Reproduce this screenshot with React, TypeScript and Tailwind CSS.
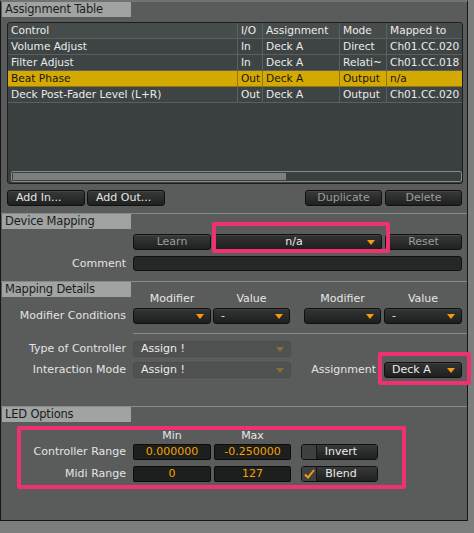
import type { ReactNode } from 'react';

const rows = [
  { control: 'Volume Adjust', io: 'In', assign: 'Deck A', mode: 'Direct', mapped: 'Ch01.CC.020' },
  { control: 'Filter Adjust', io: 'In', assign: 'Deck A', mode: 'Relati~', mapped: 'Ch01.CC.018' },
  { control: 'Beat Phase', io: 'Out', assign: 'Deck A', mode: 'Output', mapped: 'n/a', selected: true },
  { control: 'Deck Post-Fader Level (L+R)', io: 'Out', assign: 'Deck A', mode: 'Output', mapped: 'Ch01.CC.020' },
];

function Arrow({ dim }: { dim?: boolean }) {
  return (
    <svg width="8" height="5" viewBox="0 0 8 5" className="shrink-0">
      <polygon points="0,0 8,0 4,5" fill={dim ? '#8a6b3c' : '#f59b10'} />
    </svg>
  );
}

function SectionHeader({ title }: { title: string }) {
  return (
    <div className="h-[15px] w-[129px] ml-[1px] bg-[#9fa3a1] text-[#1c1c1c] text-[11.5px] leading-[15px] pl-[3px] tracking-[-0.2px]">
      {title}
    </div>
  );
}

function Separator({ className = '' }: { className?: string }) {
  return <div className={`h-px bg-[#868a88] ${className}`} />;
}

function Btn({ children, className = '', dim, left }: { children: ReactNode; className?: string; dim?: boolean; left?: boolean }) {
  return (
    <div
      className={`h-[16px] rounded-[3px] border border-[#101010] bg-linear-to-b from-[#383a3a] to-[#1f2020] shadow-[inset_0_1px_0_rgba(255,255,255,0.07)] text-[11px] leading-[14px] flex items-center ${
        left ? 'justify-start pl-[8px]' : 'justify-center'
      } ${dim ? 'text-[#9a9c9c]' : 'text-[#e6e6e6]'} ${className}`}
    >
      {children}
    </div>
  );
}

function Dropdown({ children, className = '', center, disabled }: { children?: ReactNode; className?: string; center?: boolean; disabled?: boolean }) {
  return (
    <div
      className={`h-[16px] rounded-[3px] border flex items-center pl-[7px] pr-[6px] text-[11px] leading-[14px] text-[#ececec] ${
        disabled
          ? 'border-[#4a4c4c] bg-[#505252]'
          : 'border-[#101010] bg-linear-to-b from-[#333535] to-[#1e1f1f] shadow-[inset_0_1px_0_rgba(255,255,255,0.06)]'
      } ${className}`}
    >
      <span className={`flex-1 whitespace-nowrap ${center ? 'text-center' : ''}`}>{children}</span>
      <Arrow dim={disabled} />
    </div>
  );
}

function Field({ value, className = '' }: { value: string; className?: string }) {
  return (
    <div className={`h-[16px] rounded-[2px] border border-[#0c0c0c] bg-[#1d1e1e] text-[#f4a300] text-[11px] leading-[14px] text-center ${className}`}>
      {value}
    </div>
  );
}

function CheckBtn({ label, checked, className = '' }: { label: string; checked?: boolean; className?: string }) {
  return (
    <div className={`h-[16px] rounded-[3px] border border-[#101010] flex overflow-hidden ${className}`}>
      <div className="w-[15px] bg-[#3f4141] border-r border-[#151515] flex items-center justify-center">
        {checked && (
          <svg width="11" height="10" viewBox="0 0 11 10">
            <path d="M1 5.5 L4 8.5 L10 1" stroke="#f59b10" strokeWidth="2" fill="none" />
          </svg>
        )}
      </div>
      <div className="flex-1 bg-linear-to-b from-[#383a3a] to-[#1f2020] text-[#eaeaea] text-[11px] leading-[14px] text-center pr-[12px]">
        {label}
      </div>
    </div>
  );
}

function Label({ children, className = 'w-[125px]' }: { children: ReactNode; className?: string }) {
  return <div className={`text-right text-[11px] leading-[16px] text-[#e4e4e4] whitespace-nowrap ${className}`}>{children}</div>;
}

function Cell({ children, last, sel }: { children: ReactNode; last?: boolean; sel?: boolean }) {
  return (
    <div
      className={`pl-[3px] whitespace-nowrap overflow-hidden border-b ${last ? '' : 'border-r'} ${
        sel ? 'border-[#8c7516]' : 'border-[#5a6060]'
      }`}
    >
      {children}
    </div>
  );
}

function AssignmentTable() {
  const cols = 'grid grid-cols-[230px_25px_77px_47px_1fr] h-[16px] text-[10.6px] leading-[15px]';
  return (
    <div className="ml-[6px] mt-[5px] w-[456px] h-[162px] rounded-[3px] border border-[#1c1f1f] bg-[#3a4040] flex flex-col overflow-hidden">
      <div className={`${cols} bg-[#464b4b] text-[#ececec]`}>
        <Cell>Control</Cell>
        <Cell>I/O</Cell>
        <Cell>Assignment</Cell>
        <Cell>Mode</Cell>
        <Cell last>Mapped to</Cell>
      </div>
      {rows.map((r) => (
        <div key={r.control} className={`${cols} ${r.selected ? 'bg-[#d4aa02] text-[#161616]' : 'bg-[#3e4444] text-[#ececec]'}`}>
          <Cell sel={r.selected}>{r.control}</Cell>
          <Cell sel={r.selected}>{r.io}</Cell>
          <Cell sel={r.selected}>{r.assign}</Cell>
          <Cell sel={r.selected}>{r.mode}</Cell>
          <Cell sel={r.selected} last>
            {r.mapped}
          </Cell>
        </div>
      ))}
      <div className="flex-1" />
      <div className="ml-[3px] mb-[1px] h-[11px] rounded-[2px] border border-[#858a88] bg-[#3a4040] p-px">
        <div className="h-full w-[273px] bg-[#7b807e]" />
      </div>
    </div>
  );
}

export default function App() {
  return (
    <div className="relative w-[474px] h-[533px] bg-[#7a7f7d] font-['DejaVu_Sans',Verdana,sans-serif] overflow-hidden">
      <div className="w-[468px] h-[521px] bg-[#5a5b5b] border-x border-b border-[#161616] border-t-2 border-t-[#6f7372] flex flex-col">
        <SectionHeader title="Assignment Table" />
        <AssignmentTable />

        <div className="flex mt-[6px] pr-[5px]">
          <Btn left className="ml-[6px] w-[78px]">Add In...</Btn>
          <Btn left className="ml-[2px] w-[78px]">Add Out...</Btn>
          <Btn dim className="ml-auto w-[77px]">Duplicate</Btn>
          <Btn dim className="ml-[3px] w-[77px]">Delete</Btn>
        </div>

        <Separator className="mt-[7px]" />
        <SectionHeader title="Device Mapping" />

        <div className="flex mt-[5px]">
          <div className="w-[132px]" />
          <Btn dim className="w-[78px]">Learn</Btn>
          <Dropdown center className="ml-[2px] w-[169px]">n/a</Dropdown>
          <Btn dim className="ml-[3px] w-[77px]">Reset</Btn>
        </div>

        <div className="flex mt-[6px]">
          <Label>Comment</Label>
          <div className="ml-[7px] w-[329px] h-[15px] rounded-[3px] border border-[#101010] bg-[#262828]" />
        </div>

        <Separator className="mt-[9px]" />
        <SectionHeader title="Mapping Details" />

        <div className="flex -mt-[4px] h-[12px] text-[11px] leading-[12px] text-[#e6e6e6]">
          <div className="w-[132px]" />
          <div className="w-[78px] text-center">Modifier</div>
          <div className="ml-[2px] w-[77px] text-center">Value</div>
          <div className="ml-[14px] w-[77px] text-center">Modifier</div>
          <div className="ml-[3px] w-[78px] text-center">Value</div>
        </div>

        <div className="flex mt-[3px]">
          <Label>Modifier Conditions</Label>
          <Dropdown className="ml-[7px] w-[78px]" />
          <Dropdown className="ml-[2px] w-[77px]">-</Dropdown>
          <Dropdown className="ml-[14px] w-[77px]" />
          <Dropdown className="ml-[3px] w-[78px]">-</Dropdown>
        </div>

        <Separator className="mt-[9px] ml-[132px]" />

        <div className="flex mt-[7px]">
          <Label>Type of Controller</Label>
          <Dropdown disabled className="ml-[7px] w-[158px]">Assign !</Dropdown>
        </div>

        <div className="flex mt-[5px]">
          <Label>Interaction Mode</Label>
          <Dropdown disabled className="ml-[7px] w-[158px]">Assign !</Dropdown>
          <Label className="w-[85px]">Assignment</Label>
          <Dropdown className="ml-[8px] w-[78px]">Deck A</Dropdown>
        </div>

        <Separator className="mt-[28px]" />
        <SectionHeader title="LED Options" />

        <div className="flex mt-[8px] h-[11px] text-[11px] leading-[11px] text-[#e6e6e6]">
          <div className="w-[132px]" />
          <div className="w-[78px] text-center">Min</div>
          <div className="ml-[3px] w-[77px] text-center">Max</div>
        </div>

        <div className="flex mt-[3px]">
          <Label>Controller Range</Label>
          <Field value="0.000000" className="ml-[7px] w-[78px]" />
          <Field value="-0.250000" className="ml-[3px] w-[77px]" />
          <CheckBtn label="Invert" className="ml-[10px] w-[77px]" />
        </div>

        <div className="flex mt-[6px]">
          <Label>Midi Range</Label>
          <Field value="0" className="ml-[7px] w-[78px]" />
          <Field value="127" className="ml-[3px] w-[77px]" />
          <CheckBtn label="Blend" checked className="ml-[10px] w-[77px]" />
        </div>
      </div>

      {/* annotation highlights */}
      <div className="absolute left-[212px] top-[222px] w-[178px] h-[31px] border-4 border-[#ef3170] rounded-[2px] pointer-events-none" />
      <div className="absolute left-[378px] top-[352px] w-[93px] h-[33px] border-4 border-[#ef3170] rounded-[2px] pointer-events-none" />
      <div className="absolute left-[17px] top-[426px] w-[389px] h-[63px] border-4 border-[#ef3170] rounded-[2px] pointer-events-none" />
    </div>
  );
}
